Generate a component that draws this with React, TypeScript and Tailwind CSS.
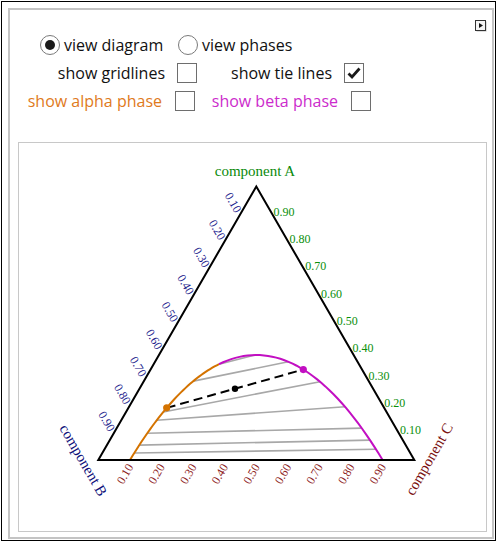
import React from "react";

const A = { x: 256.3, y: 186.5 };
const B = { x: 98.3, y: 460 };
const C = { x: 414.3, y: 460 };

// binodal curve, fitted to the picture
const cx = 256.3;
const half = 126.3;
const peak = 105;
const curveY = (x: number) => 460 - peak * (1 - ((x - cx) / half) ** 2);

function curvePath(x0: number, x1: number) {
  const pts: string[] = [];
  const n = 40;
  for (let i = 0; i <= n; i++) {
    const x = x0 + ((x1 - x0) * i) / n;
    pts.push(`${i === 0 ? "M" : "L"}${x.toFixed(2)},${curveY(x).toFixed(2)}`);
  }
  return pts.join(" ");
}

const ties: [number, number][] = [
  [219, 255],
  [193.3, 288.3],
  [163.3, 320],
  [156.7, 345],
  [147.3, 361.7],
  [139.3, 370],
  [134.3, 376],
];

const ticks = [1, 2, 3, 4, 5, 6, 7, 8, 9];

function Diagram() {
  const alpha = { x: 166.7, y: curveY(166.7) };
  const beta = { x: 303.3, y: curveY(303.3) };
  const mid = { x: 235, y: alpha.y + ((beta.y - alpha.y) * (235 - alpha.x)) / (beta.x - alpha.x) };
  return (
    <svg width="467" height="388" className="block">
      <g transform="translate(-19,-143)" fontFamily="'Liberation Serif', 'Times New Roman', serif">
        {/* tie lines */}
        {ties.map(([l, r], i) => (
          <line key={i} x1={l} y1={curveY(l)} x2={r} y2={curveY(r)} stroke="#a8a8a8" strokeWidth="1.6" />
        ))}
        {/* phase boundary */}
        <path d={curvePath(130, 219)} fill="none" stroke="#d47300" strokeWidth="2" />
        <path d={curvePath(219, 382.6)} fill="none" stroke="#c20fc2" strokeWidth="2" />
        {/* triangle */}
        <polygon
          points={`${A.x},${A.y} ${B.x},${B.y} ${C.x},${C.y}`}
          fill="none"
          stroke="#000"
          strokeWidth="2"
        />
        {/* current tie line */}
        <line
          x1={alpha.x}
          y1={alpha.y}
          x2={beta.x}
          y2={beta.y}
          stroke="#000"
          strokeWidth="2"
          strokeDasharray="9 5"
        />
        <circle cx={alpha.x} cy={alpha.y} r="3.6" fill="#d47300" />
        <circle cx={beta.x} cy={beta.y} r="3.6" fill="#c20fc2" />
        <circle cx={mid.x} cy={mid.y} r="3.2" fill="#000" />

        {/* A ticks, right side */}
        {ticks.map((t) => {
          const a = t / 10;
          const x = C.x + a * (A.x - C.x);
          const y = C.y + a * (A.y - C.y);
          return (
            <text key={`a${t}`} x={x + 1.5} y={y - 1} fontSize="12" fill="#0a8f0a" dominantBaseline="middle">
              {a.toFixed(2)}
            </text>
          );
        })}
        {/* B ticks, left side */}
        {ticks.map((t) => {
          const b = t / 10;
          const x = A.x + b * (B.x - A.x);
          const y = A.y + b * (B.y - A.y);
          return (
            <text
              key={`b${t}`}
              transform={`translate(${x},${y}) rotate(60)`}
              x={-3}
              y={2}
              fontSize="12"
              fill="#1a1a8c"
              textAnchor="end"
              dominantBaseline="middle"
            >
              {b.toFixed(2)}
            </text>
          );
        })}
        {/* C ticks, bottom */}
        {ticks.map((t) => {
          const c = t / 10;
          const x = B.x + c * (C.x - B.x);
          return (
            <text
              key={`c${t}`}
              transform={`translate(${x},${B.y}) rotate(-60)`}
              x={-4}
              y={4}
              fontSize="12"
              fill="#8c1a1a"
              textAnchor="end"
              dominantBaseline="middle"
            >
              {c.toFixed(2)}
            </text>
          );
        })}

        <text x="255" y="176" fontSize="15" fill="#0a8a0a" textAnchor="middle">
          component A
        </text>
        <text
          transform="translate(82,461) rotate(60)"
          fontSize="15"
          fill="#10107a"
          textAnchor="middle"
          dominantBaseline="middle"
        >
          component B
        </text>
        <text
          transform="translate(430.5,460) rotate(-60)"
          fontSize="15"
          fill="#7a1010"
          textAnchor="middle"
          dominantBaseline="middle"
        >
          component C
        </text>
      </g>
    </svg>
  );
}

function Radio({ on }: { on?: boolean }) {
  return (
    <span className="flex h-[20px] w-[20px] shrink-0 items-center justify-center rounded-full border border-[#7a7a7a] bg-white">
      {on && <span className="h-[10px] w-[10px] rounded-full bg-[#1a1a1a]" />}
    </span>
  );
}

function Check({ on }: { on?: boolean }) {
  return (
    <span className="flex h-[20px] w-[20px] shrink-0 items-center justify-center border border-[#6e6e6e] bg-white">
      {on && (
        <svg width="16" height="16" viewBox="0 0 16 16">
          <path d="M2.5 8.5 L6 12 L13.5 3.5" fill="none" stroke="#1a1a1a" strokeWidth="2.8" />
        </svg>
      )}
    </span>
  );
}

export default function App() {
  return (
    <div className="h-[546px] w-[501px] bg-white pl-px pt-px font-['Open_Sans','Noto_Sans',sans-serif] text-[16px] text-[#111]">
      <div className="h-[540px] w-[495px] border border-black pl-[6px] pt-[6px]">
        <div className="h-[531px] w-[486px] border-2 border-[#c4c4c4] pl-[8px] pt-[10px]">
          <div className="flex h-[11px] w-[469px] justify-end">
            <svg width="12" height="12" viewBox="0 0 12 12" className="block">
              <rect x="1.5" y="1.5" width="10" height="10" fill="#bbb" />
              <rect x="0.5" y="0.5" width="10" height="10" fill="#f4f4f4" stroke="#333" />
              <path d="M4 3 L8 5.5 L4 8 Z" fill="#111" />
            </svg>
          </div>

          <div className="flex h-[28px] items-center pl-[22px] leading-none">
            <Radio on />
            <span className="w-[118px] pl-[4px]">view diagram</span>
            <Radio />
            <span className="pl-[4px]">view phases</span>
          </div>

          <div className="flex h-[28px] items-center leading-none">
            <span className="w-[147px] text-right">show gridlines</span>
            <span className="w-[12px]" />
            <Check />
            <span className="w-[135px] text-right">show tie lines</span>
            <span className="w-[12px]" />
            <Check on />
          </div>

          <div className="flex h-[28px] items-center leading-none">
            <span className="w-[144px] text-right text-[#e07a1c]">show alpha phase</span>
            <span className="w-[13px]" />
            <Check />
            <span className="w-[143px] text-right text-[#cc2ccc]">show beta phase</span>
            <span className="w-[13px]" />
            <Check />
          </div>

          <div className="mt-[27px] h-[390px] w-[469px] border border-[#c8c8c8] bg-white">
            <Diagram />
          </div>
        </div>
      </div>
    </div>
  );
}
